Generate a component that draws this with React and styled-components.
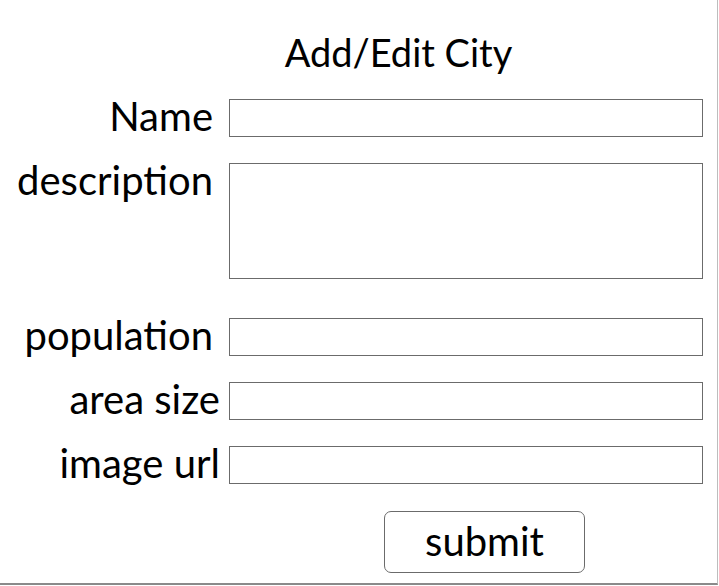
import React from 'react';
import styled, { createGlobalStyle } from 'styled-components';

const GlobalStyle = createGlobalStyle`
    html, body {
        margin: 0;
        padding: 0;
        background: #ffffff;
    }
    body {
        font-family: 'Lato', 'Liberation Sans', sans-serif;
        color: #000000;
    }
`;

const Frame = styled.div`
    box-sizing: border-box;
    width: 718px;
    height: 585px;
    border-right: 1px solid #bdbdbd;
    border-bottom: 2px solid #8a8a8a;
    padding-top: 28px;
`;

const Title = styled.h1`
    margin: 0 0 23px 0;
    padding-left: 80px;
    text-align: center;
    font-size: 38px;
    font-weight: 400;
    line-height: 48px;
`;

const Form = styled.form`
    display: flex;
    flex-direction: column;
    gap: 26px;
`;

const Row = styled.div`
    display: grid;
    grid-template-columns: 229px 474px;
    align-items: start;
    margin-bottom: ${p => p.$extra || 0}px;
`;

const Label = styled.label`
    text-align: right;
    padding-right: ${p => p.$gap}px;
    font-size: 40px;
    line-height: 34px;
    white-space: nowrap;
`;

const Field = styled.input`
    box-sizing: border-box;
    width: 474px;
    height: 38px;
    margin: 0;
    border: 1px solid #6b6b6b;
    background: #ffffff;
    padding: 0 6px;
    font-family: inherit;
    font-size: 20px;
    outline: none;
`;

const Area = styled.textarea`
    box-sizing: border-box;
    width: 474px;
    height: 116px;
    margin: 0;
    border: 1px solid #6b6b6b;
    background: #ffffff;
    padding: 4px 6px;
    font-family: inherit;
    font-size: 20px;
    resize: none;
    outline: none;
`;

const Actions = styled.div`
    display: flex;
    padding-left: 384px;
    margin-top: 1px;
`;

const SubmitButton = styled.button`
    box-sizing: border-box;
    width: 201px;
    height: 62px;
    border: 1px solid #6b6b6b;
    border-radius: 7px;
    background: #ffffff;
    font-family: 'Lato', 'Liberation Sans', sans-serif;
    font-size: 40px;
    line-height: 1;
    color: #000000;
    padding: 0 0 2px 0;
    cursor: pointer;
`;

const fields = [
    { id: 'name', label: 'Name', gap: 16 },
    { id: 'population', label: 'population', gap: 16 },
    { id: 'area', label: 'area size', gap: 9 },
    { id: 'image', label: 'image url', gap: 9 },
];

const App = () => {
    const [first, ...rest] = fields;
    return (
        <>
            <GlobalStyle />
            <Frame>
                <Title>Add/Edit City</Title>
                <Form onSubmit={e => e.preventDefault()}>
                    <Row>
                        <Label htmlFor={first.id} $gap={first.gap}>{first.label}</Label>
                        <Field id={first.id} type="text" />
                    </Row>
                    <Row $extra={13}>
                        <Label htmlFor="description" $gap={16}>description</Label>
                        <Area id="description" />
                    </Row>
                    {rest.map(f => (
                        <Row key={f.id}>
                            <Label htmlFor={f.id} $gap={f.gap}>{f.label}</Label>
                            <Field id={f.id} type="text" />
                        </Row>
                    ))}
                    <Actions>
                        <SubmitButton type="submit">submit</SubmitButton>
                    </Actions>
                </Form>
            </Frame>
        </>
    );
};

export default App;
